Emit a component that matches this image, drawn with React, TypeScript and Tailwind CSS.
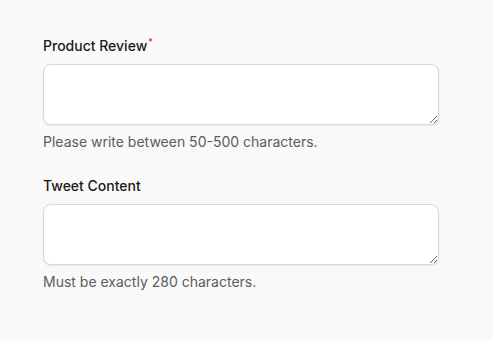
import React from "react";

export default function App() {
  return (
    <div
      className="min-h-[340px] w-full bg-[#f9f9f9] pl-[43px] pt-[36px]"
      style={{ fontFamily: "Inter, 'Liberation Sans', sans-serif" }}
    >
      <div className="flex w-[396px] flex-col">
        <label className="flex h-[20px] items-center text-[14px] font-medium leading-[20px] text-[#1a1a1a]">
          Product Review
          <span className="ml-[1px] -mt-[9px] text-[9px] leading-none text-[#dc2626]">*</span>
        </label>
        <textarea
          className="mt-[7.5px] h-[61px] w-[396px] rounded-[8px] border border-[#d9d9d9] bg-white px-3 py-2 text-[14px] shadow-[0_1px_2px_rgba(0,0,0,0.08)] outline-none"
        />
        <p className="mt-[7.5px] h-[20px] text-[14px] leading-[20px] text-[#5c5c5c]">
          Please write between 50-500 characters.
        </p>
        <label className="mt-[24px] flex h-[20px] items-center text-[14px] font-medium leading-[20px] text-[#1a1a1a]">
          Tweet Content
        </label>
        <textarea
          className="mt-[7.5px] h-[61px] w-[396px] rounded-[8px] border border-[#d9d9d9] bg-white px-3 py-2 text-[14px] shadow-[0_1px_2px_rgba(0,0,0,0.08)] outline-none"
        />
        <p className="mt-[7.5px] h-[20px] text-[14px] leading-[20px] text-[#5c5c5c]">
          Must be exactly 280 characters.
        </p>
      </div>
    </div>
  );
}
